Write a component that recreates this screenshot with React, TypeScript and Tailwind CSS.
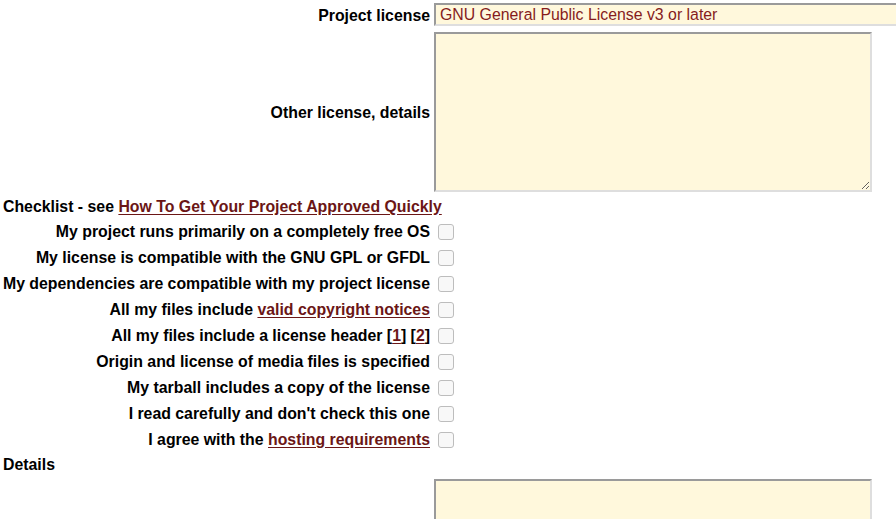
import React from 'react';

const linkCls = 'text-[#6b1616] underline underline-offset-2';
const fieldBorder =
  'border-2 border-t-[#9a9a9a] border-l-[#9a9a9a] border-r-[#dedede] border-b-[#dedede] bg-[#fff8dc] outline-none';

const checks: React.ReactNode[] = [
  'My project runs primarily on a completely free OS',
  'My license is compatible with the GNU GPL or GFDL',
  'My dependencies are compatible with my project license',
  <>
    All my files include <a href="#" className={linkCls}>valid copyright notices</a>
  </>,
  <>
    All my files include a license header [<a href="#" className={linkCls}>1</a>] [
    <a href="#" className={linkCls}>2</a>]
  </>,
  'Origin and license of media files is specified',
  'My tarball includes a copy of the license',
  "I read carefully and don't check this one",
  <>
    I agree with the <a href="#" className={linkCls}>hosting requirements</a>
  </>,
];

export default function App() {
  return (
    <div className="w-[896px] h-[519px] overflow-hidden bg-white text-black font-['Liberation_Sans',Arial,sans-serif] text-[15.85px] font-bold leading-[18px]">
      <div className="grid grid-cols-[427px_1fr] gap-x-[4px] pl-[3px] pt-[3px]">
        <div className="h-[23px] pt-[2px] flex items-center justify-end">Project license</div>
        <div className="h-[23px]">
          <input
            type="text"
            defaultValue="GNU General Public License v3 or later"
            className={`${fieldBorder} w-[480px] h-[23px] px-[4px] font-normal text-[15.85px] text-[#861c1c]`}
          />
        </div>

        <div className="mt-[6px] h-[160px] pt-[2px] flex items-center justify-end">Other license, details</div>
        <div className="mt-[6px] h-[160px]">
          <textarea className={`${fieldBorder} block w-[438px] h-[160px] resize`} />
        </div>

        <div className="col-span-2 mt-[2px] h-[24px] pt-[2px] flex items-center">
          <span>
            Checklist - see <a href="#" className={linkCls}>How To Get Your Project Approved Quickly</a>
          </span>
        </div>

        {checks.map((label, i) => (
          <React.Fragment key={i}>
            <div className="h-[26px] pt-[2px] flex items-center justify-end whitespace-nowrap">
              <span>{label}</span>
            </div>
            <div className="h-[26px] pt-[1px] flex items-center">
              <input
                type="checkbox"
                className="appearance-none m-0 ml-[4px] w-[16px] h-[16px] rounded-[3px] border border-[#bdbdbd] bg-[#f8f8f8]"
              />
            </div>
          </React.Fragment>
        ))}

        <div className="col-span-2 h-[24px] pt-[2px] flex items-center">Details</div>
        <div></div>
        <div className="mt-[3px]">
          <textarea className={`${fieldBorder} block w-[438px] h-[120px]`} />
        </div>
      </div>
    </div>
  );
}
